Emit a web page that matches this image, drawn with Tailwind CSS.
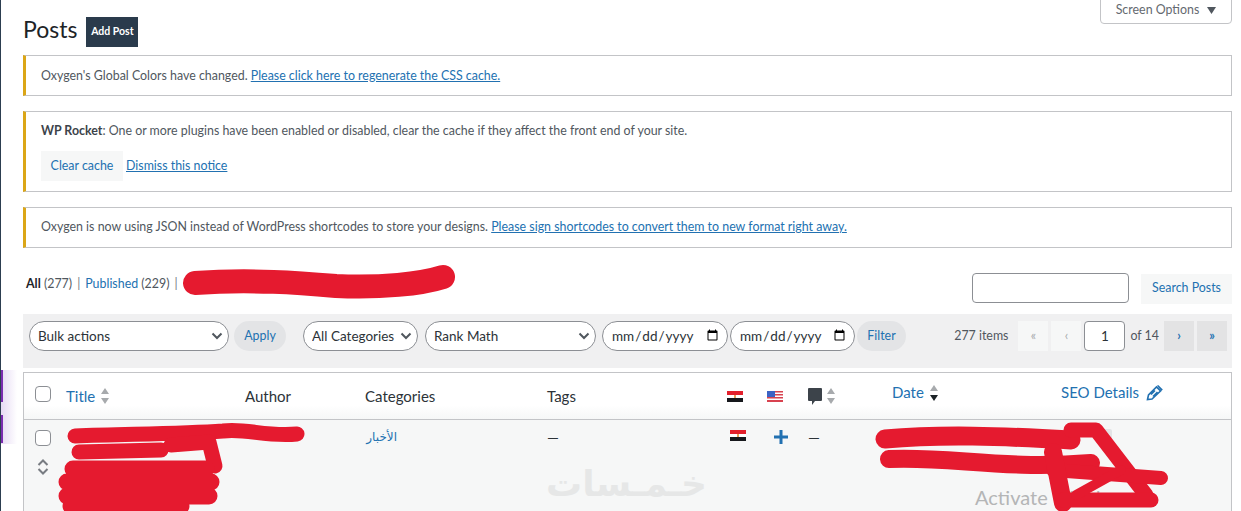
<!DOCTYPE html>
<html lang="en">
<head>
  <meta charset="UTF-8" />
  <title>Posts</title>
  <script src="https://cdn.jsdelivr.net/npm/@tailwindcss/browser@4"></script>
</head>
<body class="bg-white text-[#50575e] font-['Lato','DejaVu_Sans',sans-serif] text-[12.4px]">
<div class="relative h-[511px] overflow-hidden border-l border-[#2c3e50] pl-[22px] pr-[9px]">

  <!-- Sidebar glow -->
  <div class="absolute left-0 top-[370px] h-[74px] w-[16px] bg-gradient-to-r from-[#e6daf3] to-white"></div>
  <div class="absolute left-[-1px] top-[370px] h-[32px] w-[3px] bg-[#7b2cb0]"></div>
  <div class="absolute left-[-1px] top-[415px] h-[28px] w-[3px] bg-[#7b2cb0]"></div>

  <!-- Screen options -->
  <button class="absolute right-[9px] top-[-1px] flex h-[25px] w-[132px] items-center justify-center gap-[8px] rounded-b-[4px] border border-[#c3c4c7] bg-white pb-[3px] text-[#646970]">
    Screen Options
    <svg width="9" height="7" viewBox="0 0 9 7"><path d="M0 0h9L4.500 7z" fill="#50575e"/></svg>
  </button>

  <!-- Heading -->
  <div class="flex h-[55px] items-start pt-[17px]">
    <h1 class="text-[23px] leading-[25px] text-[#1d2327]">Posts</h1>
    <a class="ml-[9px] flex h-[30px] w-[52px] items-center justify-center bg-[#2a3b4c] text-[10.500px] font-bold text-white">Add Post</a>
  </div>

  <!-- Notices -->
  <div class="flex h-[41px] items-center border border-l-[3px] border-[#c3c4c7] border-l-[#dba617] pl-[15px] pt-[1px]">
    <p>Oxygen's Global Colors have changed. <a class="text-[#2271b1] underline">Please click here to regenerate the CSS cache.</a></p>
  </div>
  <div class="mt-[15px] h-[81px] border border-l-[3px] border-[#c3c4c7] border-l-[#dba617] pl-[15px] pt-[10px]">
    <p class="leading-[18px]"><b class="text-[#3c434a]">WP Rocket</b>: One or more plugins have been enabled or disabled, clear the cache if they affect the front end of your site.</p>
    <div class="mt-[11px] flex items-center gap-[3px]">
      <a class="flex h-[30px] w-[82px] items-center justify-center bg-[#f6f7f7] text-[#2271b1]">Clear cache</a>
      <a class="text-[#2271b1] underline">Dismiss this notice</a>
    </div>
  </div>
  <div class="mt-[15px] flex h-[41px] items-center border border-l-[3px] border-[#c3c4c7] border-l-[#dba617] pb-[1px] pl-[15px]">
    <p>Oxygen is now using JSON instead of WordPress shortcodes to store your designs. <a class="text-[#2271b1] underline">Please sign shortcodes to convert them to new format right away.</a></p>
  </div>

  <!-- Filters and search -->
  <div class="mt-[25px] flex h-[31px] items-center">
    <p class="mb-[8px] ml-[3px] flex gap-[5px]"><span><b class="text-[#1d2327]">All</b> (277)</span><span class="text-[#787c82]">|</span><span><a class="text-[#2271b1]">Published</a> (229)</span><span class="text-[#787c82]">|</span></p>
    <input class="mb-[1px] ml-auto h-[30px] w-[157px] rounded-[4px] border border-[#8c8f94] bg-white" aria-label="Search" />
    <a class="ml-[12px] flex h-[30px] w-[91px] items-center justify-center bg-[#f6f7f7] text-[#2271b1]">Search Posts</a>
  </div>

  <!-- Table nav -->
  <div class="mt-[10px] flex h-[54px] items-start bg-[#f0f0f1] pl-[6px] pr-[5px] pt-[7px]">
    <div class="relative w-[200px]">
      <select class="h-[30px] w-full appearance-none rounded-full border border-[#8c8f94] bg-white pl-[8px] text-[13.500px] text-[#2c3338]"><option>Bulk actions</option></select>
      <svg class="absolute right-[6px] top-[10px]" width="12" height="10" viewBox="0 0 12 10"><path d="M1.500 2.500 6 7l4.500-4.500" fill="none" stroke="#50575e" stroke-width="2"/></svg>
    </div>
    <a class="ml-[5px] flex h-[30px] w-[52px] items-center justify-center rounded-full bg-[#e3e4e6] text-[#2271b1]">Apply</a>
    <div class="relative ml-[17px] w-[115px]">
      <select class="h-[30px] w-full appearance-none rounded-full border border-[#8c8f94] bg-white pl-[8px] text-[13.500px] text-[#2c3338]"><option>All Categories</option></select>
      <svg class="absolute right-[6px] top-[10px]" width="12" height="10" viewBox="0 0 12 10"><path d="M1.500 2.500 6 7l4.500-4.500" fill="none" stroke="#50575e" stroke-width="2"/></svg>
    </div>
    <div class="relative ml-[7px] w-[171px]">
      <select class="h-[30px] w-full appearance-none rounded-full border border-[#8c8f94] bg-white pl-[8px] text-[13.500px] text-[#2c3338]"><option>Rank Math</option></select>
      <svg class="absolute right-[6px] top-[10px]" width="12" height="10" viewBox="0 0 12 10"><path d="M1.500 2.500 6 7l4.500-4.500" fill="none" stroke="#50575e" stroke-width="2"/></svg>
    </div>
    <input type="date" class="ml-[6px] h-[30px] w-[126px] rounded-full border border-[#8c8f94] bg-white pl-[8px] pr-[6px] text-[13.500px] text-[#2c3338]" />
    <input type="date" class="ml-[2px] h-[30px] w-[125px] rounded-full border border-[#8c8f94] bg-white pl-[8px] pr-[6px] text-[13.500px] text-[#2c3338]" />
    <a class="ml-[2px] flex h-[30px] w-[49px] items-center justify-center rounded-full bg-[#e3e4e6] text-[#2271b1]">Filter</a>
    <div class="ml-auto flex h-[30px] items-center">
      <span class="mr-[10px]">277 items</span>
      <span class="flex h-[30px] w-[30px] items-center justify-center bg-[#f6f7f7] text-[#a7aaad]">«</span>
      <span class="ml-[3px] flex h-[30px] w-[30px] items-center justify-center bg-[#f6f7f7] text-[#a7aaad]">‹</span>
      <input value="1" class="ml-[3px] h-[30px] w-[41px] rounded-[4px] border border-[#8c8f94] bg-white text-center text-[13.500px] text-[#2c3338]" aria-label="Page" />
      <span class="ml-[5px] mr-[5px]">of 14</span>
      <span class="flex h-[30px] w-[30px] items-center justify-center bg-[#e3e3e4] font-bold text-[#2271b1]">›</span>
      <span class="ml-[3px] flex h-[30px] w-[30px] items-center justify-center bg-[#e3e3e4] font-bold text-[#2271b1]">»</span>
    </div>
  </div>

  <!-- Posts table -->
  <div class="mt-[4px] border border-[#c3c4c7] text-[15px] text-[#2c3338]">
    <div class="grid h-[47px] grid-cols-[42px_179px_120px_182px_180px_40px_41px_84px_169px_1fr] items-center border-b border-[#c3c4c7] bg-gradient-to-b from-white from-70% to-[#f6f7f7]">
      <div class="pb-[5px] pl-[11px]"><span class="block h-[16px] w-[16px] rounded-[4px] border border-[#8c8f94] bg-white"></span></div>
      <div class="flex items-center gap-[5px] text-[#2271b1]">Title
        <svg width="10" height="16" viewBox="0 0 10 16"><path d="M5 0l4 6H1zM5 16l-4-6h8z" fill="#a7aaad"/></svg>
      </div>
      <div>Author</div>
      <div>Categories</div>
      <div>Tags</div>
      <div>
        <svg width="16" height="11" viewBox="0 0 16 11"><path d="M0 0h16v4H0z" fill="#e3202c"/><path d="M0 4h16v3H0z" fill="#fff"/><path d="M0 7h16v4H0z" fill="#16181c"/><path d="M7 4h2v3H7z" fill="#e8a15c"/></svg>
      </div>
      <div>
        <svg width="16" height="11" viewBox="0 0 16 11"><path d="M0 0h16v11H0z" fill="#fff"/><path d="M0 0h16v1.500H0zM0 3h16v1.500H0zM0 6h16v1.500H0zM0 9h16v2H0z" fill="#d8424f"/><path d="M0 0h8v6H0z" fill="#3c63c4"/></svg>
      </div>
      <div class="flex items-center gap-[4px]">
        <svg width="14" height="17" viewBox="0 0 14 17"><path d="M1 0h12a1 1 0 0 1 1 1v11a1 1 0 0 1-1 1H7l-3 4v-4H1a1 1 0 0 1-1-1V1a1 1 0 0 1 1-1z" fill="#3c434a"/></svg>
        <svg width="10" height="16" viewBox="0 0 10 16"><path d="M5 0l4 6H1zM5 16l-4-6h8z" fill="#a7aaad"/></svg>
      </div>
      <div class="flex items-center gap-[5px] pb-[7px] text-[#2271b1]">Date
        <svg width="10" height="16" viewBox="0 0 10 16"><path d="M5 0l4 6H1z" fill="#a7aaad"/><path d="M5 16l-4-6h8z" fill="#1d2327"/></svg>
      </div>
      <div class="flex items-center gap-[7px] pb-[7px] text-[#2271b1]">SEO Details
        <svg width="17" height="16" viewBox="0 0 17 16"><path d="M1.500 14.500 2.500 10 10.500 2 14.500 6 6 14zM5 9.500 9 5.500M7 11.500 11.500 7" fill="none" stroke="#2271b1" stroke-width="1.600"/><path d="M11 .8 12.200 0 16.800 4.400 15.300 6z" fill="#2271b1"/></svg>
      </div>
    </div>
    <div class="grid h-[120px] grid-cols-[42px_179px_120px_182px_180px_40px_41px_84px_169px_1fr] bg-[#f6f7f7] pt-[9px] text-[13px]">
      <div class="flex flex-col items-start gap-[12px] pl-[11px] pt-[1px]">
        <span class="block h-[16px] w-[16px] rounded-[4px] border border-[#8c8f94] bg-white"></span>
        <svg class="ml-[2px]" width="12" height="18" viewBox="0 0 12 18"><path d="M1.500 7 6 2.500 10.500 7M1.500 11 6 15.500 10.500 11" fill="none" stroke="#787c82" stroke-width="2"/></svg>
      </div>
      <div></div>
      <div></div>
      <div dir="rtl" class="w-[32px] text-[12px] leading-[16px] text-[#2271b1]">الأخبار</div>
      <div class="text-[15px] leading-[16px]">—</div>
      <div class="pl-[3px] pt-[1px]">
        <svg width="16" height="11" viewBox="0 0 16 11"><path d="M0 0h16v4H0z" fill="#e3202c"/><path d="M0 4h16v3H0z" fill="#fff"/><path d="M0 7h16v4H0z" fill="#16181c"/><path d="M7 4h2v3H7z" fill="#e8a15c"/></svg>
      </div>
      <div class="pl-[7px] pt-[1px]">
        <svg width="14" height="14" viewBox="0 0 14 14"><path d="M5.500 0h3v5.500H14v3H8.500V14h-3V8.500H0v-3h5.500z" fill="#2271b1"/></svg>
      </div>
      <div class="text-[15px] leading-[16px]">—</div>
      <div></div>
      <div><span class="ml-[35px] block h-[12px] w-[16px] rounded-[2px] bg-[#e3e4e6]"></span></div>
    </div>
  </div>

  <!-- Watermarks on top of the page -->
  <div dir="rtl" class="absolute left-[545px] top-[458px] text-[36px] font-bold leading-[48px] text-[#e6e7e7]">خـمـسات</div>
  <div class="absolute left-[974px] top-[485px] text-[20px] leading-[24px] text-[#b4b5b6]">Activate Windows</div>

  <!-- Redaction scribbles -->
  <svg class="absolute left-0 top-0" width="1241" height="511" viewBox="0 0 1241 511">
    <g fill="none" stroke="#e51a2f" stroke-linecap="round" stroke-linejoin="round">
      <path d="M194 283C250 279 300 283 335 286C380 288 420 284 442 277" stroke-width="24"/>
      <path d="M74 436C130 434 180 434 222 431C245 428 265 437 296 434" stroke-width="15"/>
      <path d="M78 452 160 450M170 445 208 442 214 466" stroke-width="15"/>
      <path d="M72 469H205M66 482H210M66 496H208M70 506H180" stroke-width="17"/>
      <path d="M884 439C940 434 1000 436 1070 440" stroke-width="19"/>
      <path d="M888 459C950 456 1000 470 1090 463" stroke-width="18"/>
      <path d="M1070 430H1095L1145 495" stroke-width="15"/>
      <path d="M1052 470 1160 478" stroke-width="14"/>
      <path d="M1052 452 1062 503" stroke-width="18"/>
      <path d="M1062 500H1150" stroke-width="15"/>
      <path d="M1120 470 1075 495" stroke-width="10"/>
    </g>
  </svg>
</div>
</body>
</html>
